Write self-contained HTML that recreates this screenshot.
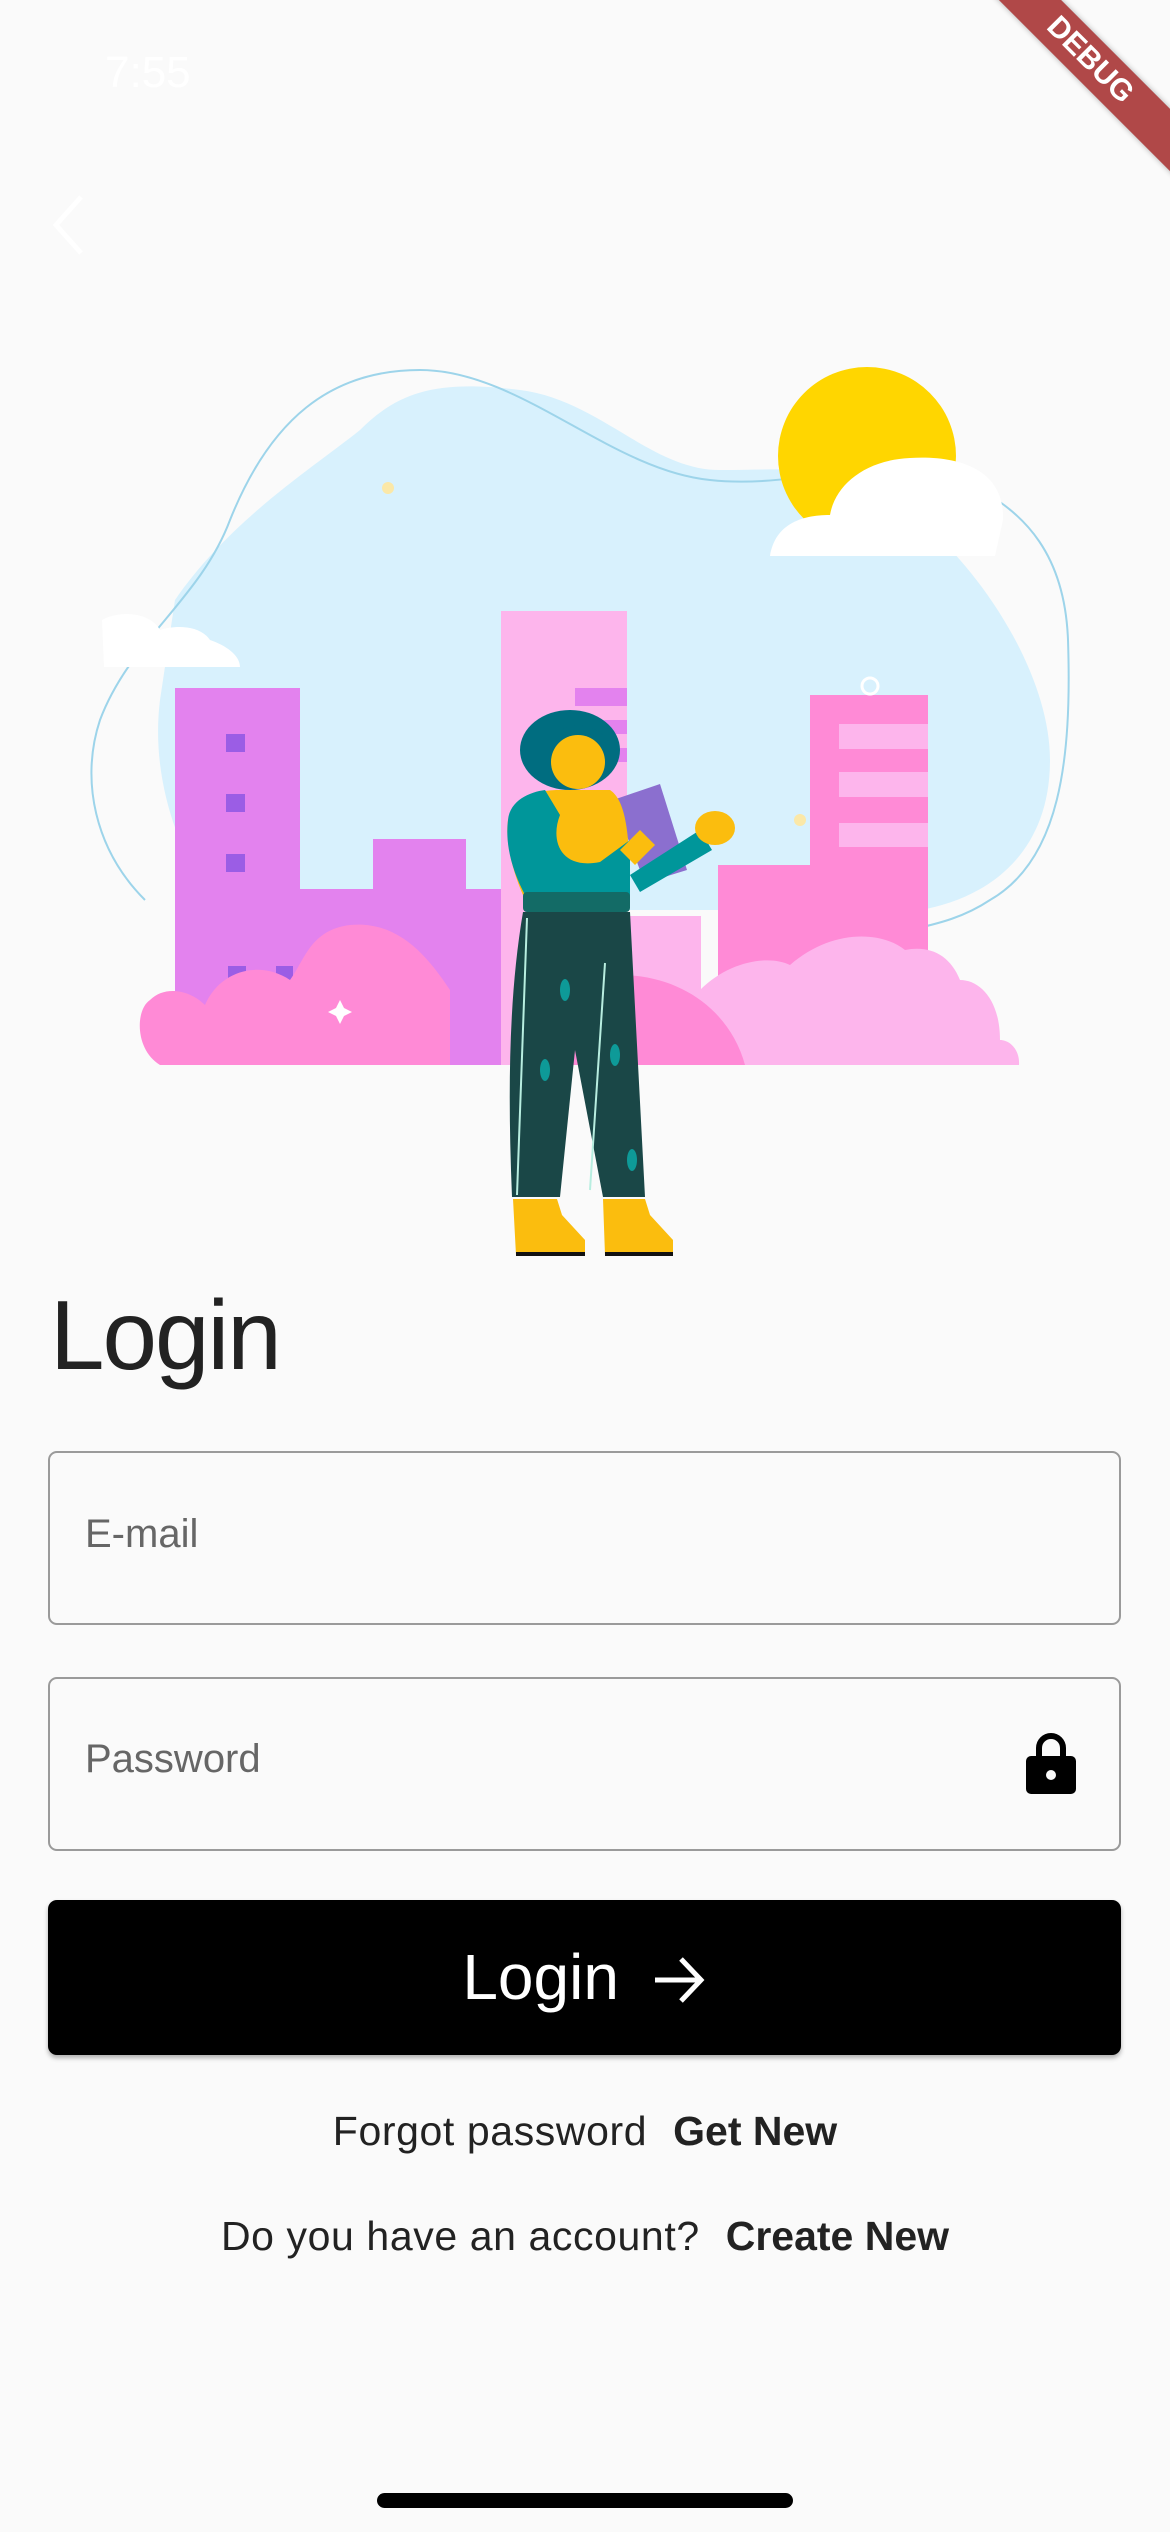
<!DOCTYPE html>
<html><head><meta charset="utf-8"><style>
html,body{margin:0;padding:0}
body{width:1170px;height:2532px;background:#fafafa;position:relative;overflow:hidden;font-family:"Liberation Sans",sans-serif}
.abs{position:absolute}
.title{left:50px;top:1270px;font-size:98px;color:#222;line-height:130px;letter-spacing:-2px}
.box{left:48px;width:1073px;height:174px;border:2px solid #9a9a9a;border-radius:9px;box-sizing:border-box}
.ph{left:85px;font-size:40px;color:#666}
.btn{left:48px;top:1900px;width:1073px;height:155px;background:#000;border-radius:9px;box-shadow:0 3px 5px rgba(0,0,0,.3);color:#fff;font-size:64px;text-align:center;line-height:155px}
.line{left:0;width:1170px;text-align:center;font-size:41px;color:#222;letter-spacing:0.6px}
.line b{font-weight:bold;margin-left:26px;letter-spacing:0}
.ribbon{right:-70px;top:38px;width:300px;height:44px;background:#b04848;transform:rotate(45deg);color:#fff;font-weight:bold;font-size:30px;text-align:center;line-height:44px;box-shadow:0 0 6px rgba(0,0,0,.3)}
</style></head><body>
<svg class="abs" style="left:0;top:0" width="1170" height="1300" viewBox="0 0 1170 1300">
<path d="M175 600 C230 520 310 470 360 430 C400 390 440 380 520 390 C600 400 650 470 720 470 C800 470 850 460 920 520 C990 580 1050 680 1050 760 C1050 860 980 900 920 910 L220 910 C180 860 150 780 160 700 Z" fill="#d8f1fd"/>
<path d="M145 900 C95 850 80 780 100 720 C130 640 200 600 230 520 C270 420 330 370 420 370 C520 370 610 470 710 480 C800 490 880 450 960 480 C1030 510 1065 560 1068 640 C1072 760 1060 860 990 900 C960 920 930 925 910 930" fill="none" stroke="#9dd4ea" stroke-width="2"/>
<circle cx="388" cy="488" r="6" fill="#fbe8a8"/>
<circle cx="800" cy="820" r="6" fill="#fbe8a8"/>
<circle cx="867" cy="456" r="89" fill="#ffd600"/>
<path d="M770 556 C775 525 800 515 830 515 C835 485 865 460 910 458 C960 455 1005 470 1003 520 L995 556 Z" fill="#fff"/>
<path d="M104 667 L102 620 C120 610 150 612 160 630 C175 625 200 625 210 640 C225 645 240 655 240 667 Z" fill="#fff"/>
<rect x="501" y="611" width="126" height="454" fill="#fdb5ec"/>
<rect x="575" y="688" width="52" height="18" fill="#e382ee"/>
<rect x="575" y="720" width="52" height="14" fill="#e382ee"/>
<rect x="575" y="748" width="52" height="14" fill="#e382ee"/>
<rect x="175" y="688" width="125" height="377" fill="#e382ee"/>
<rect x="300" y="889" width="201" height="176" fill="#e382ee"/>
<rect x="373" y="839" width="93" height="60" fill="#e382ee"/>
<rect x="226" y="734" width="19" height="18" fill="#9b5de5"/>
<rect x="226" y="794" width="19" height="18" fill="#9b5de5"/>
<rect x="226" y="854" width="19" height="18" fill="#9b5de5"/>
<rect x="228" y="966" width="18" height="18" fill="#9b5de5"/>
<rect x="276" y="966" width="17" height="14" fill="#9b5de5"/>
<rect x="321" y="966" width="17" height="18" fill="#9b5de5"/>
<rect x="612" y="916" width="89" height="149" fill="#fdb5ec"/>
<rect x="718" y="865" width="92" height="200" fill="#ff8ad6"/>
<rect x="810" y="695" width="118" height="370" fill="#ff8ad6"/>
<rect x="839" y="724" width="89" height="25" fill="#fdb5ec"/>
<rect x="839" y="772" width="89" height="25" fill="#fdb5ec"/>
<rect x="839" y="823" width="89" height="24" fill="#fdb5ec"/>
<circle cx="870" cy="686" r="8" fill="none" stroke="#fff" stroke-width="3"/>
<path d="M700 1065 L700 990 C730 960 770 955 790 965 C830 930 880 930 905 950 C930 945 950 955 960 980 C980 980 1000 1000 1000 1040 C1010 1040 1020 1050 1019 1065 Z" fill="#fdb5ec"/>
<path d="M160 1065 C135 1050 135 1010 150 1000 C165 985 190 990 205 1005 C220 970 260 960 290 980 C305 960 310 930 350 925 C400 920 430 960 450 990 L450 1065 Z" fill="#ff8ad6"/>
<path d="M540 1065 C560 1000 590 975 620 975 C680 975 730 1010 745 1065 Z" fill="#ff8ad6"/>
<path d="M336 1008 L340 1000 L344 1008 L352 1012 L344 1016 L340 1024 L336 1016 L328 1012 Z" fill="#fff"/>
<path d="M523 912 L630 912 L645 1197 L603 1197 L575 1050 L560 1197 L512 1197 C508 1100 508 1000 523 912 Z" fill="#1a4747"/>
<path d="M527 918 L517 1195 M605 963 L590 1190" stroke="#b8eee0" stroke-width="2" fill="none"/>
<ellipse cx="565" cy="990" rx="5" ry="11" fill="#0e9a98"/>
<ellipse cx="615" cy="1055" rx="5" ry="11" fill="#0e9a98"/>
<ellipse cx="545" cy="1070" rx="5" ry="11" fill="#0e9a98"/>
<ellipse cx="632" cy="1160" rx="5" ry="11" fill="#0e9a98"/>
<path d="M513 1199 L557 1199 L562 1215 L585 1240 L585 1255 L516 1255 Z" fill="#fbbd0e"/>
<path d="M603 1199 L645 1199 L650 1215 L673 1240 L673 1255 L605 1255 Z" fill="#fbbd0e"/>
<rect x="516" y="1252" width="69" height="4" fill="#111"/>
<rect x="605" y="1252" width="68" height="4" fill="#111"/>
<path d="M613 800 L660 784 L687 870 L645 883 Z" fill="#8b6fcf"/>
<path d="M508 820 C515 795 540 790 560 790 L610 790 C625 800 630 830 630 895 L523 895 C512 870 505 840 508 820 Z" fill="#fbbd0e"/>
<path d="M508 820 C510 800 530 792 545 790 L560 815 C550 840 560 870 600 862 L630 840 L630 900 C600 915 550 912 525 895 C512 870 505 845 508 820 Z" fill="#00969a"/>
<path d="M630 875 L700 830 L712 850 L640 892 Z" fill="#00969a"/>
<rect x="523" y="892" width="107" height="20" rx="4" fill="#136b66"/>
<path d="M620 850 L640 830 L655 845 L635 865 Z" fill="#fbbd0e"/>
<ellipse cx="715" cy="828" rx="20" ry="17" fill="#fbbd0e"/>
<ellipse cx="570" cy="750" rx="50" ry="40" fill="#006d80"/>
<ellipse cx="578" cy="762" rx="27" ry="27" fill="#fbbd0e"/>
<path d="M550 740 C560 720 600 720 610 745 L600 740 C590 730 565 730 555 745 Z" fill="#006d80"/>
</svg>
<div class="abs ribbon">DEBUG</div>
<div class="abs" style="left:105px;top:48px;font-size:44px;color:#fff">7:55</div>
<svg class="abs" style="left:48px;top:195px" width="40" height="60"><path d="M33 2 L8 30 L33 58" stroke="#fff" stroke-width="5" fill="none"/></svg>
<div class="abs title">Login</div>
<div class="abs box" style="top:1451px"></div>
<div class="abs ph" style="top:1512px">E-mail</div>
<div class="abs box" style="top:1677px"></div>
<div class="abs ph" style="top:1737px">Password</div>
<svg class="abs" style="left:1024px;top:1730px" width="54" height="66" viewBox="0 0 54 66"><path d="M15 28 V18 a12 12 0 0 1 24 0 V28" stroke="#000" stroke-width="6" fill="none"/><rect x="2" y="26" width="50" height="38" rx="5" fill="#000"/><circle cx="27" cy="45" r="5" fill="#fafafa"/></svg>
<div class="abs btn">Login <svg width="56" height="50" viewBox="0 0 56 50" style="vertical-align:-6px;margin-left:14px"><path d="M4 25 H50 M30 4 L50 25 L30 46" stroke="#fff" stroke-width="5" fill="none"/></svg></div>
<div class="abs line" style="top:2108px">Forgot password<b>Get New</b></div>
<div class="abs line" style="top:2213px">Do you have an account?<b>Create New</b></div>
<div class="abs" style="left:377px;top:2493px;width:416px;height:15px;border-radius:8px;background:#000"></div>
</body></html>
